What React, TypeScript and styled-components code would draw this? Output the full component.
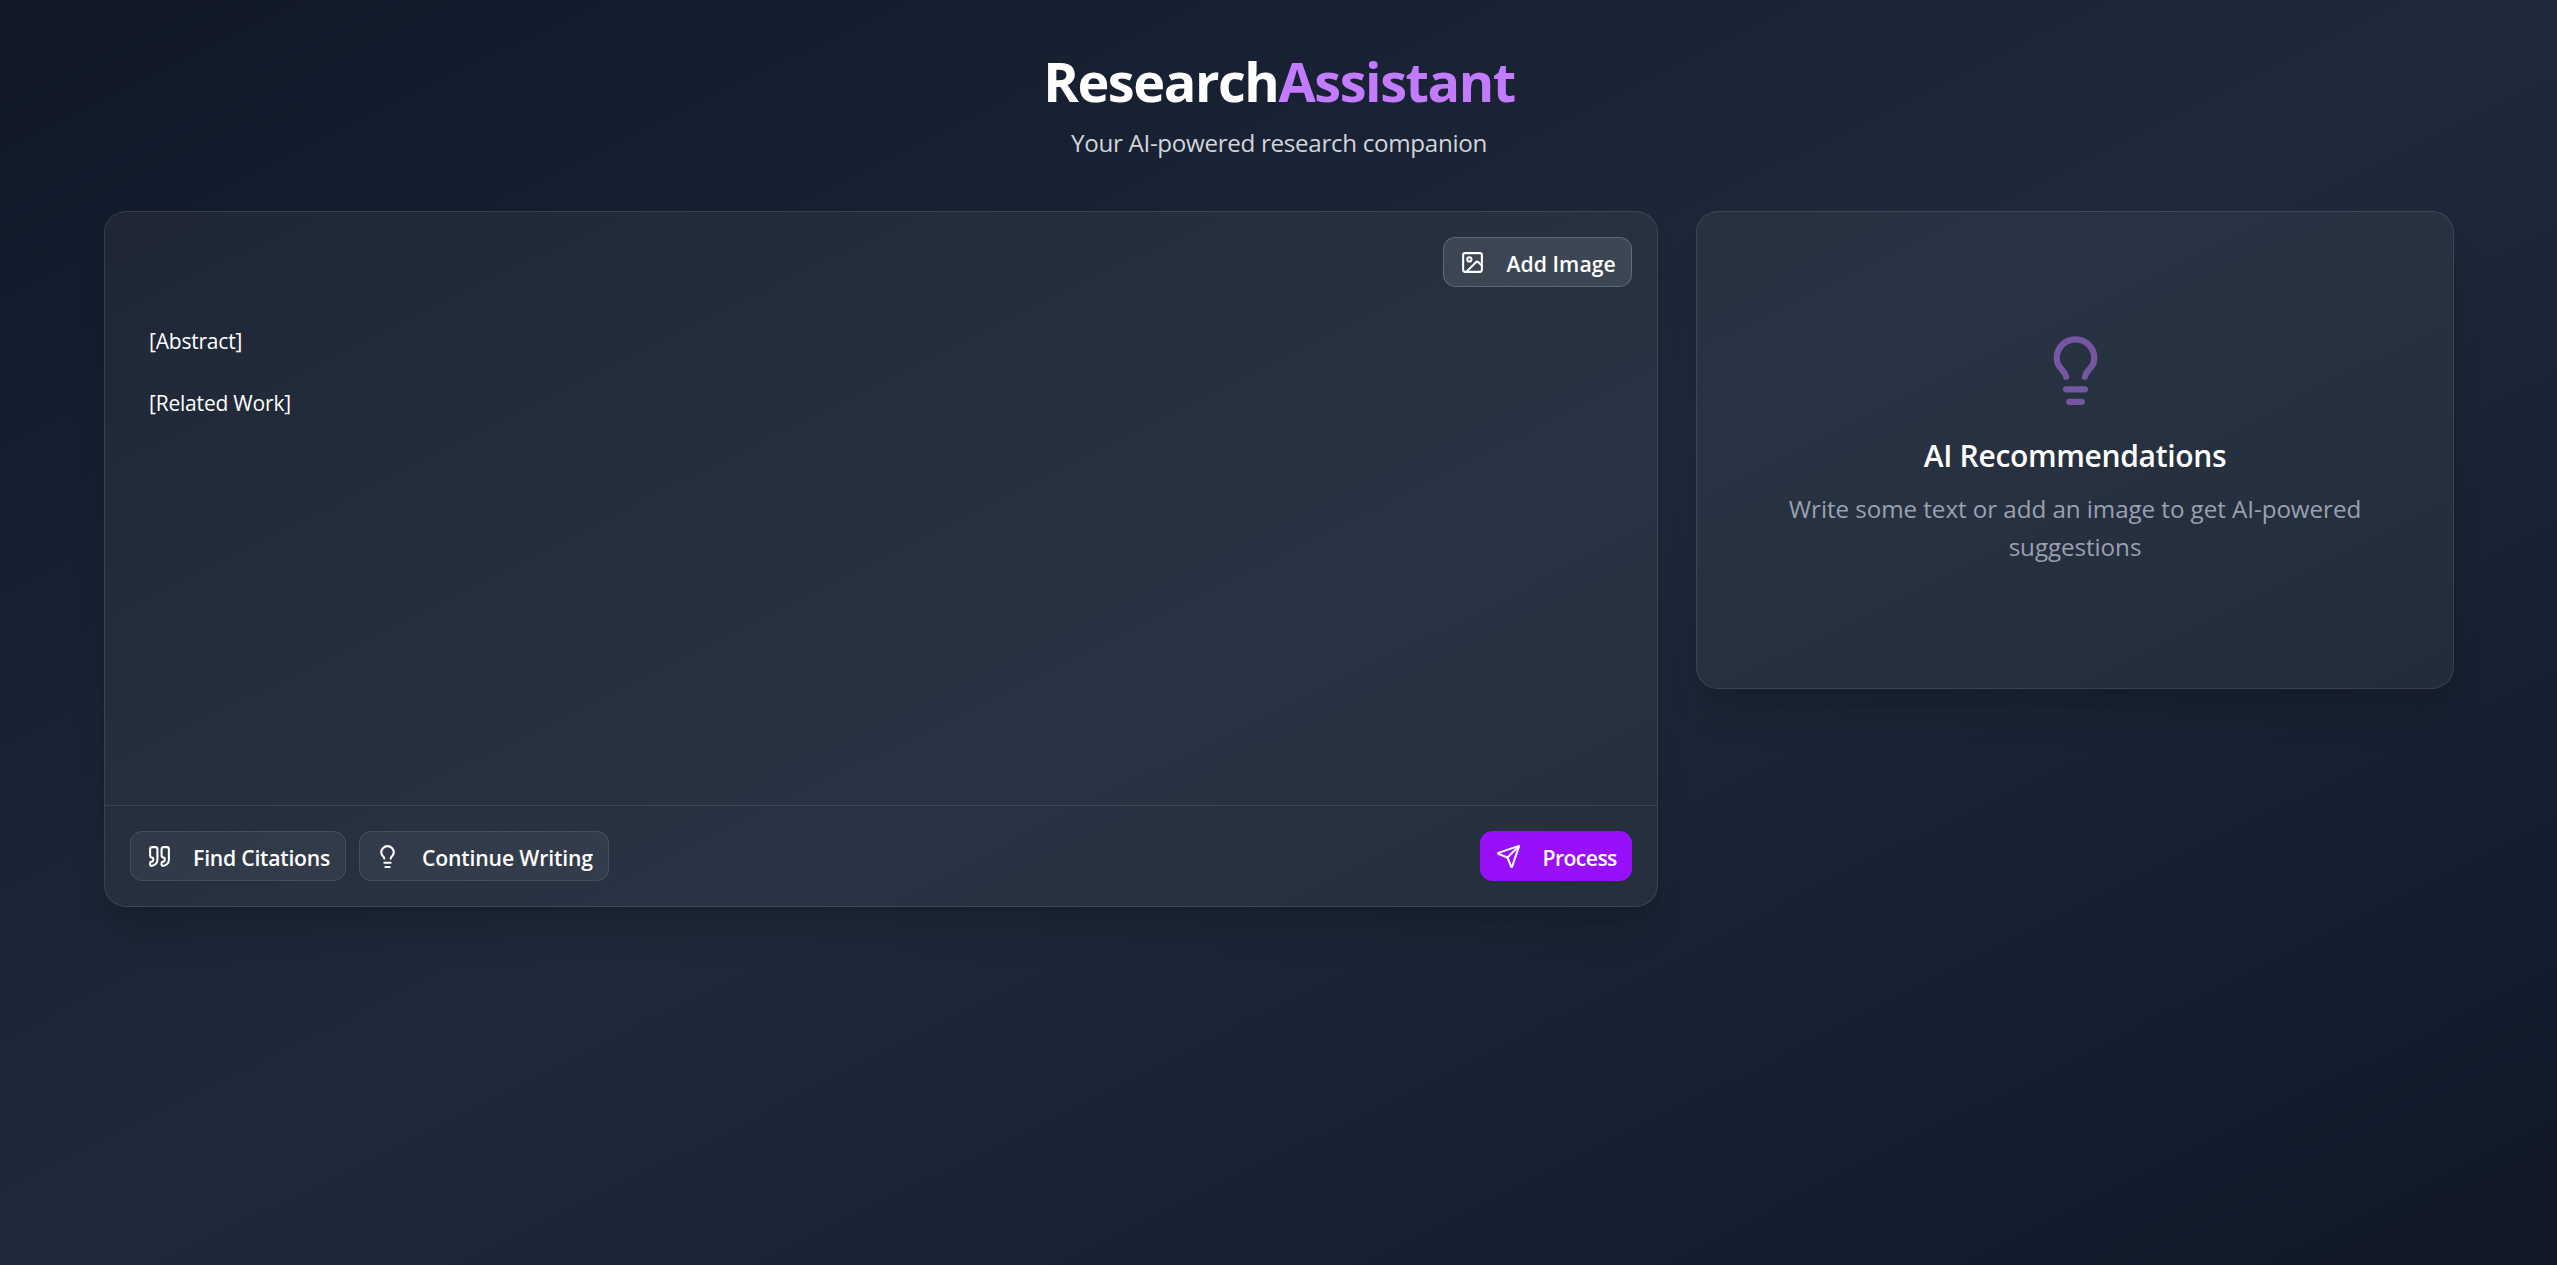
import React from "react";
import styled, { createGlobalStyle, css } from "styled-components";
import { Image, Lightbulb, Quote, Send } from "lucide-react";

const GlobalStyle = createGlobalStyle`
  *, *::before, *::after { box-sizing: border-box; }
  body { margin: 0; }
  h1, h2, p { margin: 0; }
`;

const Page = styled.div`
  min-height: 100vh;
  padding: 53px 103px 50px 104px;
  background: linear-gradient(to bottom right, #101828, #1e2939, #101828);
  color: #fff;
  font-family: "Segoe UI", "Open Sans", "Noto Sans", sans-serif;
`;

const Header = styled.header`
  display: flex;
  flex-direction: column;
  align-items: center;
  gap: 14.7px;
  margin-bottom: 49.6px;
  text-align: center;
`;

const Title = styled.h1`
  font-size: 54px;
  line-height: 56.25px;
  font-weight: 700;
  letter-spacing: -1.43px;
`;

const TitleAccent = styled.span`
  color: #c27aff;
`;

const Subtitle = styled.p`
  color: #d1d5dc;
  font-size: 24.2px;
  line-height: 37.5px;
  letter-spacing: -0.32px;
`;

const Workspace = styled.main`
  display: grid;
  grid-template-columns: minmax(0, 1554px) minmax(0, 758px);
  gap: 38px;
  align-items: start;
`;

const Card = styled.section`
  display: flex;
  flex-direction: column;
  border: 1px solid rgba(255, 255, 255, 0.1);
  border-radius: 22px;
  background: rgba(255, 255, 255, 0.05);
  box-shadow: 0 31px 39px -8px rgba(0, 0, 0, 0.1), 0 12.5px 15.6px -9px rgba(0, 0, 0, 0.1);
`;

const EditorToolbar = styled.div`
  display: flex;
  justify-content: flex-end;
  padding: 25px 25px 0;
`;

const EditorText = styled.div`
  height: 518px;
  padding: 38.7px 44px 0;
  font-size: 21px;
  line-height: 31.25px;
  letter-spacing: -0.2px;
  white-space: pre-wrap;
`;

const EditorFooter = styled.footer`
  display: flex;
  justify-content: space-between;
  padding: 25px;
  border-top: 1px solid rgba(255, 255, 255, 0.1);
`;

const ActionGroup = styled.div`
  display: flex;
  gap: 12.5px;
`;

const tones = {
  raised: css`
    border: 1px solid rgba(255, 255, 255, 0.2);
    background: rgba(255, 255, 255, 0.1);
  `,
  subtle: css`
    border: 1px solid rgba(255, 255, 255, 0.1);
    background: rgba(255, 255, 255, 0.05);
  `,
  primary: css`
    border: 0;
    background: #9810fa;
  `,
};

const Button = styled.button<{ $tone: keyof typeof tones; $tracking: number }>`
  display: inline-flex;
  align-items: center;
  gap: 21.5px;
  height: 50px;
  padding: 0 15.2px 0 15.6px;
  border-radius: 12.5px;
  color: #fff;
  font-family: inherit;
  font-size: 21.2px;
  font-weight: 600;
  line-height: 31.25px;
  letter-spacing: ${({ $tracking }) => $tracking}px;
  white-space: nowrap;
  ${({ $tone }) => tones[$tone]}
`;

const ButtonLabel = styled.span`
  padding-top: 3px;
`;

const EmptyState = styled.div`
  display: flex;
  flex-direction: column;
  align-items: center;
  padding: 120.7px 75px 122.4px;
  text-align: center;
`;

const EmptyIcon = styled(Lightbulb)`
  color: #c27aff;
  opacity: 0.5;
`;

const EmptyTitle = styled.h2`
  margin-top: 26px;
  font-size: 30px;
  line-height: 43.75px;
  font-weight: 600;
  letter-spacing: -0.33px;
`;

const EmptyText = styled.p`
  margin-top: 13px;
  color: #99a1af;
  font-size: 24.2px;
  line-height: 37.4px;
  letter-spacing: -0.06px;
`;

export default function App() {
  return (
    <Page>
      <GlobalStyle />
      <Header>
        <Title>
          Research<TitleAccent>Assistant</TitleAccent>
        </Title>
        <Subtitle>Your AI-powered research companion</Subtitle>
      </Header>
      <Workspace>
        <Card>
          <EditorToolbar>
            <Button $tone="raised" $tracking={0.06}>
              <Image size={25} />
              <ButtonLabel>Add Image</ButtonLabel>
            </Button>
          </EditorToolbar>
          <EditorText>{"[Abstract]\n\n[Related Work]"}</EditorText>
          <EditorFooter>
            <ActionGroup>
              <Button $tone="subtle" $tracking={-0.24}>
                <Quote size={25} />
                <ButtonLabel>Find Citations</ButtonLabel>
              </Button>
              <Button $tone="subtle" $tracking={-0.14}>
                <Lightbulb size={25} />
                <ButtonLabel>Continue Writing</ButtonLabel>
              </Button>
            </ActionGroup>
            <Button $tone="primary" $tracking={-0.6}>
              <Send size={25} />
              <ButtonLabel>Process</ButtonLabel>
            </Button>
          </EditorFooter>
        </Card>
        <Card>
          <EmptyState>
            <EmptyIcon size={75} />
            <EmptyTitle>AI Recommendations</EmptyTitle>
            <EmptyText>Write some text or add an image to get AI-powered suggestions</EmptyText>
          </EmptyState>
        </Card>
      </Workspace>
    </Page>
  );
}
